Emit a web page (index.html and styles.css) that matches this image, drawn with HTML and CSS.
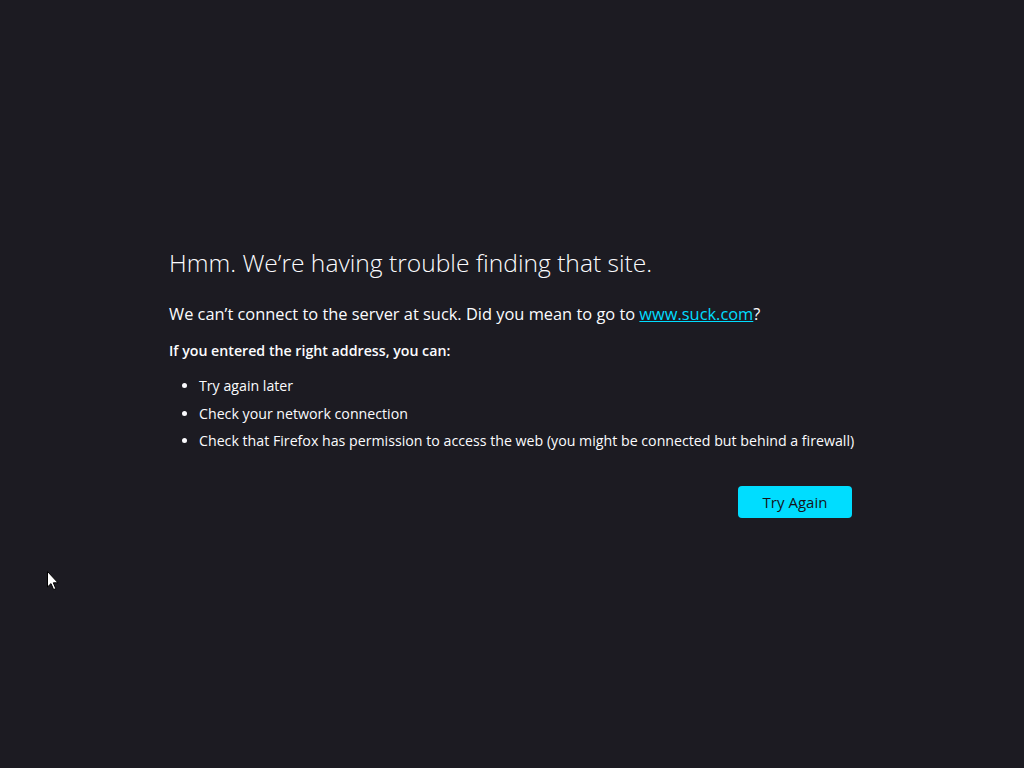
FILE: index.html
```html
<!DOCTYPE html>
<html lang="en">
<head>
<meta charset="utf-8">
<title>Server Not Found</title>
<link rel="stylesheet" href="styles.css">
</head>
<body>
<main class="container">
  <h1 class="title">Hmm. We’re having trouble finding that site.</h1>
  <p class="intro">We can’t connect to the server at suck. Did you mean to go to <a href="#" class="link">www.suck.com</a>?</p>
  <p class="hint">If you entered the right address, you can:</p>
  <ul class="tips">
    <li>Try again later</li>
    <li>Check your network connection</li>
    <li>Check that Firefox has permission to access the web (you might be connected but behind a firewall)</li>
  </ul>
  <div class="actions">
    <button class="retry" type="button">Try Again</button>
  </div>
</main>
<svg class="cursor" width="13" height="20" viewBox="0 0 13 20" aria-hidden="true">
  <path d="M0.5 0.5 L0.5 16 L4 12.6 L6.6 18.6 L8.8 17.6 L6.3 11.8 L11 11.8 Z" fill="#ffffff" stroke="#000000" stroke-width="1" stroke-linejoin="miter"/>
</svg>
</body>
</html>
```
FILE: styles.css
```css
html, body {
  margin: 0;
  padding: 0;
  height: 100%;
}

body {
  background: #1c1b22;
  color: #fbfbfe;
  font-family: "Open Sans", "Noto Sans", "Liberation Sans", sans-serif;
  display: flex;
  flex-direction: column;
  align-items: flex-start;
}

.container {
  width: 683px;
  margin: 243px 0 0 169px;
}

.title {
  margin: 0;
  font-size: 24.6px;
  font-weight: 300;
  line-height: 40px;
}

.intro {
  margin: 19px 0 0;
  font-size: 16.4px;
  line-height: 24px;
}

.link {
  color: #00ddff;
  text-decoration: underline;
}

.hint {
  margin: 13px 0 0;
  font-size: 14.2px;
  font-weight: 600;
  line-height: 24px;
}

.tips {
  margin: 13px 0 0;
  padding: 0 0 0 30px;
  font-size: 14.2px;
  line-height: 20px;
  white-space: nowrap;
}

.tips li {
  margin: 0 0 7.5px;
  padding-left: 0;
}

.actions {
  display: flex;
  justify-content: flex-end;
  margin-top: 35px;
}

.retry {
  width: 114px;
  height: 32px;
  border: none;
  border-radius: 4px;
  background: #00ddff;
  color: #15141a;
  font-family: inherit;
  font-size: 15px;
  font-weight: 400;
  padding: 0;
}

.cursor {
  position: absolute;
  left: 47px;
  top: 571px;
}
```
